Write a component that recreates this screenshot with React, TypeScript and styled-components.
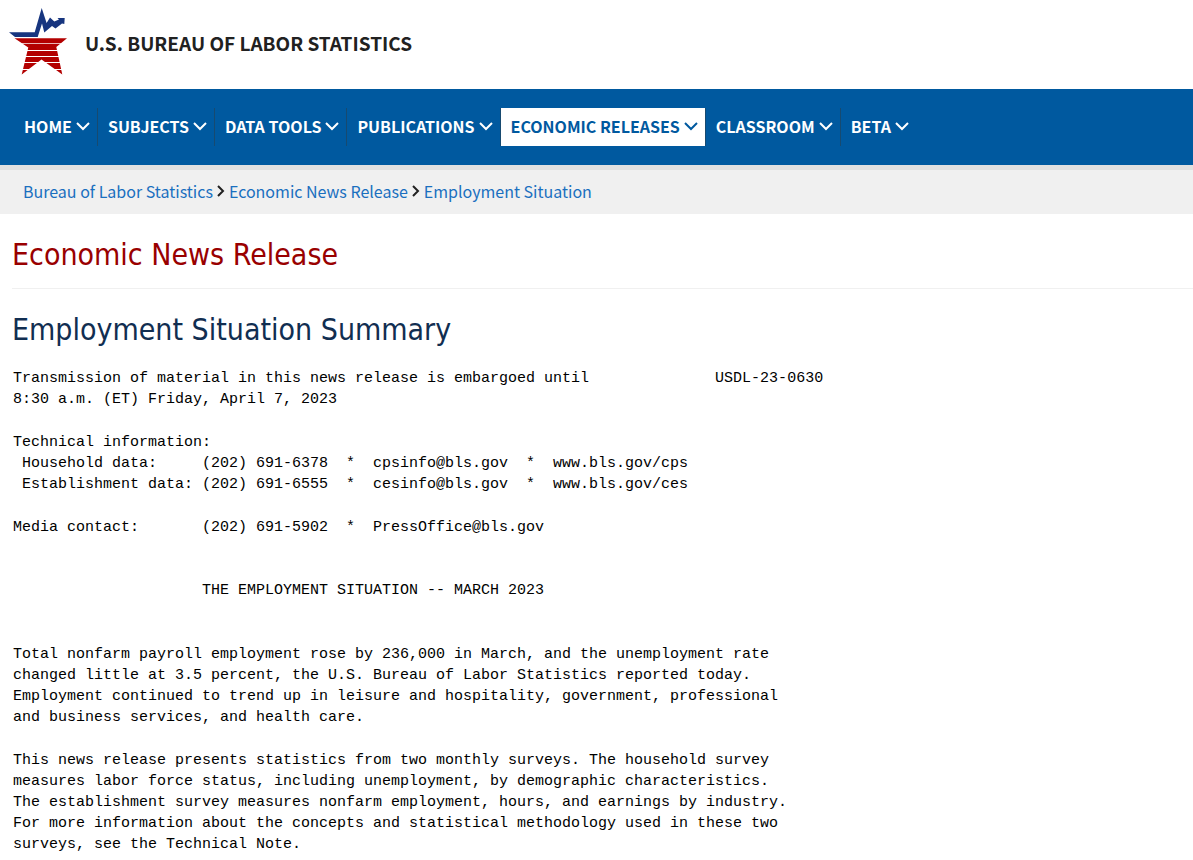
import React from "react";
import styled, { createGlobalStyle } from "styled-components";

const GlobalStyle = createGlobalStyle`
  *, *::before, *::after { box-sizing: border-box; }
  body { margin: 0; background: #fff; color: #000; }
`;

const sourceSans = `"Source Sans Pro", "Noto Sans CJK SC", sans-serif`;
const tahoma = `Tahoma, "DejaVu Sans Condensed", "DejaVu Sans", sans-serif`;

const Masthead = styled.header`
  padding: 8px 9px 14px;
`;

const Brand = styled.a`
  display: inline-flex;
  align-items: center;
  gap: 17px;
  color: #212121;
  font: 700 19px/24px ${sourceSans};
  text-decoration: none;
  vertical-align: top;
`;

const BrandName = styled.span`
  padding-top: 2px;
`;

const LogoMark = styled.svg`
  width: 59px;
  height: 67px;
`;

const NavBar = styled.nav`
  padding: 19px 14px;
  background: #00599f;
  border-bottom: 5px solid #e0e0e0;
`;

const NavList = styled.ul`
  display: flex;
  flex-wrap: wrap;
  margin: 0;
  padding: 0;
  list-style: none;
`;

const NavItem = styled.li`
  border-right: 1px solid #174a70;
  &:last-child { border-right: 0; }
`;

const NavLink = styled.a<{ $current?: boolean }>`
  display: flex;
  align-items: center;
  gap: 4px;
  height: 38px;
  padding: 0 7px 2px 10px;
  background: ${(p) => (p.$current ? "#fff" : "transparent")};
  color: ${(p) => (p.$current ? "#00599f" : "#fff")};
  font: 700 16px/20px ${sourceSans};
  text-decoration: none;
`;

const Chevron = styled.svg`
  width: 14px;
  height: 10px;
  fill: none;
  stroke: currentColor;
  stroke-width: 2;
`;

const Breadcrumbs = styled.nav`
  padding: 9px 23px 11px;
  background: #f0f0f0;
  font: 400 16px/24px ${sourceSans};
`;

const CrumbList = styled.ol`
  display: flex;
  flex-wrap: wrap;
  margin: 0;
  padding: 0;
  list-style: none;
`;

const Crumb = styled.li`
  display: flex;
  align-items: center;
`;

const CrumbLink = styled.a`
  color: #1a6fbf;
  text-decoration: none;
`;

const CrumbArrow = styled.svg`
  width: 8px;
  height: 12px;
  margin: 0 4px;
  fill: none;
  stroke: #212121;
  stroke-width: 2;
`;

const Content = styled.main`
  padding-left: 12px;
`;

const Heading = styled.h1`
  margin: 0;
  padding: 21px 0 13px;
  border-bottom: 1px solid #f0f0f0;
  color: #990000;
  font: 400 30px/40px ${tahoma};
`;

const Subheading = styled.h2`
  margin: 0;
  padding: 21px 0 18px;
  color: #112e51;
  font: 400 30px/40px ${tahoma};
`;

const Release = styled.article`
  padding: 0 12px 22px 1px;
`;

const Block = styled.pre<{ $title?: boolean }>`
  margin: ${(p) => (p.$title ? "42px 0 43px" : "0 0 22px")};
  color: #000;
  font: 400 15px/21px "Liberation Mono", monospace;
`;

const menu = [
  { label: "HOME" },
  { label: "SUBJECTS" },
  { label: "DATA TOOLS" },
  { label: "PUBLICATIONS" },
  { label: "ECONOMIC RELEASES", current: true },
  { label: "CLASSROOM" },
  { label: "BETA" },
];

const trail = ["Bureau of Labor Statistics", "Economic News Release", "Employment Situation"];

const blocks: { text: string; title?: boolean }[] = [
  {
    text: `Transmission of material in this news release is embargoed until              USDL-23-0630
8:30 a.m. (ET) Friday, April 7, 2023`,
  },
  {
    text: `Technical information:
 Household data:     (202) 691-6378  *  cpsinfo@bls.gov  *  www.bls.gov/cps
 Establishment data: (202) 691-6555  *  cesinfo@bls.gov  *  www.bls.gov/ces`,
  },
  { text: `Media contact:       (202) 691-5902  *  PressOffice@bls.gov` },
  { title: true, text: `                     THE EMPLOYMENT SITUATION -- MARCH 2023` },
  {
    text: `Total nonfarm payroll employment rose by 236,000 in March, and the unemployment rate
changed little at 3.5 percent, the U.S. Bureau of Labor Statistics reported today.
Employment continued to trend up in leisure and hospitality, government, professional
and business services, and health care.`,
  },
  {
    text: `This news release presents statistics from two monthly surveys. The household survey
measures labor force status, including unemployment, by demographic characteristics.
The establishment survey measures nonfarm employment, hours, and earnings by industry.
For more information about the concepts and statistical methodology used in these two
surveys, see the Technical Note.`,
  },
];

function Logo() {
  return (
    <LogoMark viewBox="0 0 59 67" aria-hidden="true">
      <path
        fill="#17357f"
        d="M0 24.3H25.7L32.7 0L37.6 15L41 9.500L45.300 13.500L50 11.500L48.500 10H55.700L55.300 16L53 15.500L46.500 20.500L43 18L35.300 24.500L33 15.500L28.700 28.900H6Z"
      />
      <path
        fill="#b30000"
        d="M5.500 30.300H58L47.300 39L53.300 66.500L32.500 51.500L12.700 66.500L19.300 39.500Z"
      />
      <path stroke="#fff" strokeOpacity="0.7" d="M0 35.500H59" />
      <path stroke="#fff" d="M0 42.500H59M0 48.500H59M0 54.500H59M0 61.500H59" />
    </LogoMark>
  );
}

export default function App() {
  return (
    <>
      <GlobalStyle />
      <Masthead>
        <Brand href="#">
          <Logo />
          <BrandName>U.S. BUREAU OF LABOR STATISTICS</BrandName>
        </Brand>
      </Masthead>
      <NavBar aria-label="Main">
        <NavList>
          {menu.map((item) => (
            <NavItem key={item.label}>
              <NavLink href="#" $current={item.current}>
                {item.label}
                <Chevron viewBox="0 0 14 10" aria-hidden="true">
                  <path d="M1 2l6 6 6-6" />
                </Chevron>
              </NavLink>
            </NavItem>
          ))}
        </NavList>
      </NavBar>
      <Breadcrumbs aria-label="Breadcrumb">
        <CrumbList>
          {trail.map((name, i) => (
            <Crumb key={name}>
              {i > 0 && (
                <CrumbArrow viewBox="0 0 8 12" aria-hidden="true">
                  <path d="M1 1l5 5-5 5" />
                </CrumbArrow>
              )}
              <CrumbLink href="#">{name}</CrumbLink>
            </Crumb>
          ))}
        </CrumbList>
      </Breadcrumbs>
      <Content>
        <Heading>Economic News Release</Heading>
        <Subheading>Employment Situation Summary</Subheading>
        <Release>
          {blocks.map((block) => (
            <Block key={block.text} $title={block.title}>
              {block.text}
            </Block>
          ))}
        </Release>
      </Content>
    </>
  );
}
